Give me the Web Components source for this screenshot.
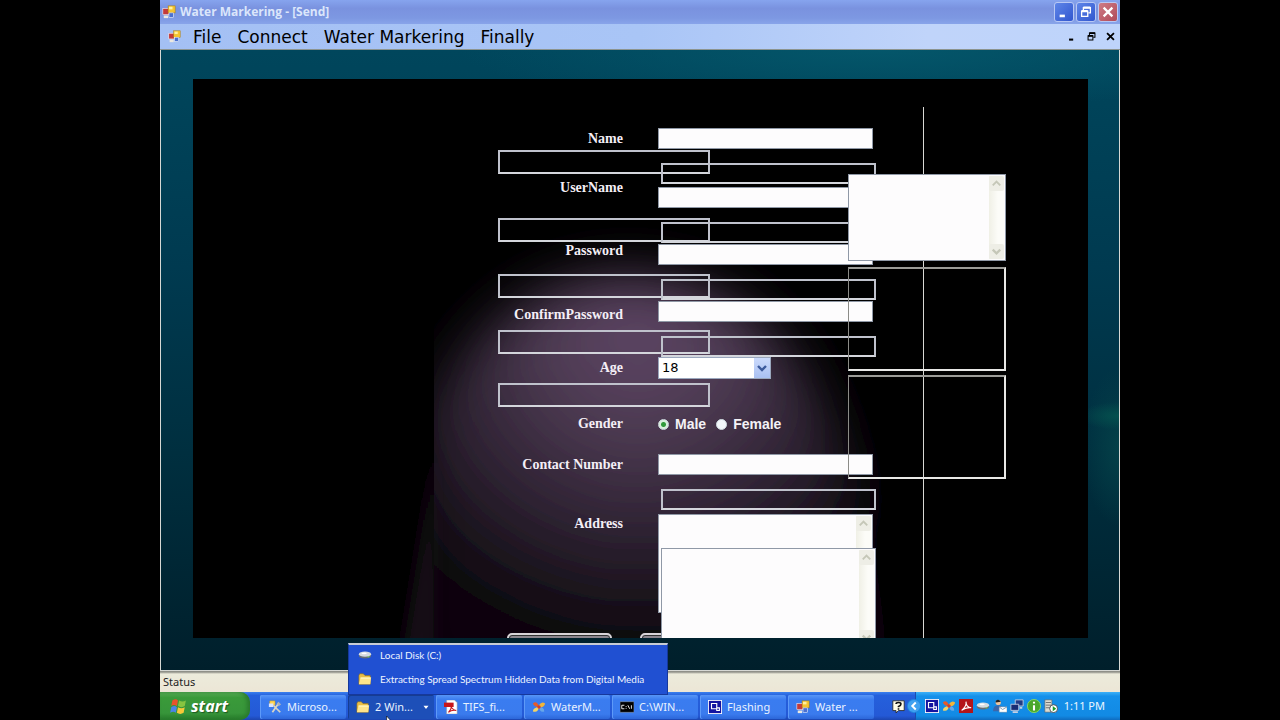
<!DOCTYPE html>
<html lang="en">
<head>
<meta charset="utf-8">
<title>Water Markering - [Send]</title>
<style>
html,body{margin:0;background:#000;overflow:hidden}
body{font-family:"Liberation Sans",sans-serif}
</style>
</head>
<body>
<xp-desktop></xp-desktop>
<script>
const ICONS = {
  form: '<rect x="1" y="4" width="7" height="7" fill="#c23a3a" stroke="#fff" stroke-width=".6"/><rect x="7" y="1" width="8" height="8" fill="#f4c430" stroke="#a87a10" stroke-width=".6"/><rect x="8" y="2" width="4" height="3" fill="#fff0a0"/><rect x="8" y="9" width="5" height="5" fill="#4a70d0" stroke="#fff" stroke-width=".6"/><path d="M2 12h5v3H2z" fill="#ece9e0"/>',
  flag: '<path d="M3 3q3-2 5 0L7 8Q4 6 2 8z" fill="#e8532a"/><path d="M9 3q3 2 6 0l-1 5q-3 2-6 0z" fill="#86c440"/><path d="M2 9q3-2 5 0l-1 5q-2-2-5 0z" fill="#4a84e8"/><path d="M8 9q3 2 6 0l-1 5q-3 2-6 0z" fill="#f8c838"/>',
  tools: '<path d="M2 1h6v5H2z" fill="#ffd858" stroke="#c29320" stroke-width=".6"/><path d="M1 4h5v4H1z" fill="#d8e4ff"/><path d="M6 6l8 8M12 4l-7 10" stroke="#d8d4c4" stroke-width="2"/><path d="M12 2l3 3-3 2-2-3z" fill="#aab0bc"/>',
  folder: '<path d="M1 4l1-2h4l2 2h6v10H1z" fill="#e9bd45" stroke="#8c6a14" stroke-width=".6"/><path d="M1 14L3 6h12l-1 8z" fill="#ffe48a"/><path d="M3 7h11" stroke="#fffbd0"/>',
  pdf: '<path d="M3 0h9l3 3v13H3z" fill="#fff" stroke="#999" stroke-width=".6"/><rect x="0" y="3" width="11" height="5" fill="#c8161a"/><path d="M5 14q4-4 3-7 1 4 6 5-5-1-9 2z" fill="none" stroke="#c8161a" stroke-width="1.2"/>',
  acro: '<rect x="0" y="0" width="16" height="16" fill="#b3151a"/><path d="M3 13q6-5 5-10 0 6 6 7-6-1-11 3z" fill="none" stroke="#fff" stroke-width="1.3"/>',
  fan: '<path d="M1 4q4-4 7 3Q3 9 1 4z" fill="#e65a28"/><path d="M8 6q3-5 7-2-1 5-7 4z" fill="#f1b63b"/><path d="M8 8q6 0 6 5-5 2-6-5z" fill="#68a7e8"/><path d="M8 8q-1 7-7 5 0-4 7-5z" fill="#f4d465"/><circle cx="8" cy="8" r="2" fill="#d73b24"/>',
  cmd: '<rect x="0" y="2" width="16" height="12" fill="#000" stroke="#788ba8" stroke-width=".8"/><path d="M5 6H2v4h3M7 7v1m0 1v1M9 6l2 4M13 6v4" stroke="#fff" fill="none"/>',
  flash: '<rect width="16" height="16" fill="#fff"/><rect x="1" y="1" width="14" height="14" fill="#1414a0"/><path d="M4 4h6v6H4zM10 9h3v3h-3z" fill="none" stroke="#fff" stroke-width="1.3"/>',
  disk: '<ellipse cx="8" cy="9" rx="7" ry="3" fill="#666d75"/><ellipse cx="8" cy="7" rx="7" ry="3" fill="#d6dce0"/><ellipse cx="7" cy="6" rx="3" ry="1" fill="#fff"/><path d="M11 10h2" stroke="#7df06b"/>',
  help: '<path d="M1 1h14v12H8l-3 3v-3H1z" fill="#fffde8" stroke="#222"/><path d="M5 5q0-2 3-2t3 2q0 2-3 3v1M8 10v2" fill="none" stroke="#111" stroke-width="2"/>',
  user: '<circle cx="6" cy="4" r="3" fill="#efc49c"/><path d="M3 4q0-4 4-3l2 2z" fill="#222"/><path d="M0 14q0-7 6-7t6 7z" fill="#3a66aa"/><rect x="7" y="9" width="9" height="6" fill="#fff" stroke="#7890a8" stroke-width=".6"/><path d="M7 9l4 3 5-3" stroke="#7890a8" fill="none"/>',
  net: '<path d="M6 1h9v7H6z" fill="#213b86" stroke="#c5d0e4"/><path d="M1 6h9v7H1z" fill="#182d74" stroke="#c5d0e4"/><path d="M3 15h6M11 10h3" stroke="#c5d0e4" stroke-width="2"/>',
  info: '<circle cx="8" cy="8" r="7.5" fill="#49a72c" stroke="#8bdb63"/><path d="M8 3v2M8 7v6" stroke="#fff" stroke-width="2.4"/>',
  server: '<path d="M1 1h8v14H1z" fill="#dcdcd2" stroke="#666" stroke-width=".7"/><path d="M2 4h6M2 7h6M2 10h6" stroke="#666"/><circle cx="11" cy="11" r="4.5" fill="#fff" stroke="#444"/><path d="M10 8l4 3-4 3z" fill="#199b25"/>',
  chev: '<circle cx="8" cy="8" r="8" fill="#2287e0"/><circle cx="8" cy="8" r="7" fill="#3fa1f0"/><path d="M10 4L6 8l4 4" fill="none" stroke="#fff" stroke-width="2.2"/>',
  min: '<path d="M3 11h6v3H3z" fill="currentColor"/>',
  restore: '<path d="M5 6V3h8v6h-2M3 7h7v6H3z" fill="none" stroke="currentColor" stroke-width="1.5"/><path d="M5 3h8M3 7h7" stroke="currentColor" stroke-width="2.4"/>',
  close: '<path d="M3 3l10 10M13 3L3 13" stroke="currentColor" stroke-width="2.6"/>',
  up: '<path d="M4 10l4-4 4 4" fill="none" stroke="currentColor" stroke-width="2"/>',
  down: '<path d="M4 6l4 4 4-4" fill="none" stroke="currentColor" stroke-width="2.4"/>',
  caret: '<path d="M4 6h8l-4 5z" fill="#fff"/>',
  cursor: '<path d="M1 0v15l4-4h6z" fill="#fff" stroke="#000"/>'
};
const define = (name, html) => {
  const t = document.createElement('template');
  customElements.define(name, class extends HTMLElement {
    constructor(){ super(); this.attachShadow({mode:'open'}); }
    connectedCallback(){
      if (this.shadowRoot.childNodes.length) return;
      t.innerHTML = typeof html === 'function' ? html(this) : html;
      this.shadowRoot.append(t.content.cloneNode(true));
    }
  });
};
const at = (el, n, d='') => el.getAttribute(n) ?? d;

define('xp-icon', el => `<style>:host{display:block;flex:none;width:var(--icon,14px);height:var(--icon,14px)}svg{display:block;width:100%;height:100%}</style>
<svg viewBox="0 0 16 16" aria-hidden="true">${ICONS[at(el,'name')]}</svg>`);

define('title-bar', `<style>
:host{display:flex;align-items:center;height:24px;padding:0 2px;gap:4px;background:linear-gradient(#86a4ee,#7a92df 35%,#7d98e2 75%,#88a4ea)}
h1{margin:0;flex:1;font:bold 12px/24px "Open Sans",sans-serif;color:#dbe6fb}
nav{display:flex;gap:2px}
button{width:20px;height:20px;padding:2px;border:1px solid #b8c8f4;border-radius:3px;background:linear-gradient(135deg,#5f86e8,#3156cf);color:#fff}
button.x{background:linear-gradient(135deg,#cf7c86,#b04a58)}
</style>
<xp-icon name="form"></xp-icon><h1>Water Markering - [Send]</h1>
<nav><button aria-label="Minimize"><xp-icon name="min"></xp-icon></button><button aria-label="Restore"><xp-icon name="restore"></xp-icon></button><button class="x" aria-label="Close"><xp-icon name="close"></xp-icon></button></nav>`);

define('menu-bar', `<style>
:host{display:flex;align-items:center;height:26px;padding:0 4px 0 8px;background:linear-gradient(90deg,#a4c0f4,#a9c5f6 50%,#c0d4fa 80%,#bed4fb);border-bottom:1px solid #8c948f;box-sizing:border-box;--icon:13px}
nav{display:flex;gap:16px;flex:1;margin-left:12px}
button{border:0;padding:0;background:none;color:#000;font:17px/22px "DejaVu Sans",sans-serif}
.mdi{display:flex;gap:8px;--icon:11px}
</style>
<xp-icon name="form"></xp-icon>
<nav><button>File</button><button>Connect</button><button>Water Markering</button><button>Finally</button></nav>
<div class="mdi"><button aria-label="Minimize form"><xp-icon name="min"></xp-icon></button><button aria-label="Restore form"><xp-icon name="restore"></xp-icon></button><button aria-label="Close form"><xp-icon name="close"></xp-icon></button></div>`);

define('text-area', el => `<style>
:host{display:flex;box-sizing:border-box;background:#fdfcfd;border:1px solid #8f98a6}
textarea{flex:1;min-width:0;border:0;padding:2px;margin:0;resize:none;background:none;outline:0;overflow:hidden}
.bar{width:15px;margin:1px;display:flex;flex-direction:column;justify-content:space-between;background:linear-gradient(90deg,#f0f0e6,#fcfcf8 60%);color:#c5c7b8;--icon:15px}
xp-icon{background:#eeeee6;border-radius:2px}
</style><textarea id="t" aria-label="${at(el,'label')}"></textarea><div class="bar"><xp-icon name="up"></xp-icon><xp-icon name="down"></xp-icon></div>`);

const FIELDS = {
  text: '<input id="f" type="text">',
  password: '<input id="f" type="password">',
  age: '<div class="pick"><select id="f"><option>18</option><option>19</option><option>20</option></select><xp-icon name="down"></xp-icon></div>',
  gender: '<div class="radios" role="radiogroup" aria-labelledby="l"><label><input type="radio" name="g" checked>Male</label><label><input type="radio" name="g">Female</label></div>',
  area: '<text-area label="Address"></text-area>'
};
define('form-row', el => `<style>
:host{display:grid;grid-template-columns:125px 215px;column-gap:35px;align-items:center}
.l{display:block;font:bold 14px/20px "Liberation Serif",serif;color:#f4eef6;text-align:right;white-space:nowrap;align-self:var(--label-align,center)}
.f{align-self:var(--field-align,center)}
input:not([type=radio]){display:block;box-sizing:border-box;width:100%;height:21px;border:1px solid #8f98a6;background:#fdfcfd;padding:1px 3px;outline:0}
.pick{position:relative;width:113px;--icon:16px;color:#3c5a9c}
select{display:block;appearance:none;box-sizing:border-box;width:100%;height:22px;border:1px solid #9aa7bd;background:#fff;padding:0 3px;font:13px/20px "DejaVu Sans",sans-serif;color:#000;border-radius:0}
.pick xp-icon{position:absolute;right:1px;top:1px;height:20px;background:linear-gradient(#cbdafc,#a9c0f2);pointer-events:none}
.radios{display:flex;gap:10px}
.radios label{display:flex;align-items:center;gap:6px;font:bold 14px/22px "Liberation Sans",sans-serif;color:#f4f2f6}
input[type=radio]{appearance:none;margin:0;width:11px;height:11px;border-radius:50%;background:#f2f7fa;border:1px solid #cfdbe0}
input[type=radio]:checked{background:radial-gradient(circle,#2f9a3a 2px,#d9efdc 3px)}
text-area{height:99px}
</style>
${/gender|area/.test(at(el,'kind')) ? `<div class="l" id="l">${at(el,'label')}</div>` : `<label class="l" for="f">${at(el,'label')}</label>`}
<div class="f">${FIELDS[at(el,'kind')]}</div>`);

define('spot-light', `<style>:host{display:block;position:absolute;inset:0;overflow:hidden}svg{display:block}</style>
<svg width="895" height="560" viewBox="0 0 895 560" aria-hidden="true">
<defs><radialGradient id="g" gradientUnits="userSpaceOnUse" cx="445" cy="255" r="310">
<stop offset="0" stop-color="#5e4665"/><stop offset=".3" stop-color="#4e3b53"/><stop offset=".55" stop-color="#35283a"/><stop offset=".78" stop-color="#211824"/><stop offset="1" stop-color="#080609"/></radialGradient>
<filter id="b" x="-20%" y="-20%" width="140%" height="140%"><feGaussianBlur stdDeviation="26"/></filter>
<filter id="s" x="-60%" y="-20%" width="220%" height="140%"><feGaussianBlur stdDeviation="8"/></filter>
<clipPath id="c"><path d="M241 0h654v560H241z"/></clipPath></defs>
<path d="M245 350L205 600h40z" fill="#120b12" filter="url(#s)"/>
<g clip-path="url(#c)"><path d="M225 600V345C270 250 345 198 430 196C530 196 605 250 645 360C675 430 690 500 695 600z" fill="url(#g)" filter="url(#b)"/></g>
</svg>`);

define('send-form', `<style>
:host{display:grid;grid-template-columns:1fr 508px 82px;position:relative;min-height:0;overflow:hidden;background:#000}
form{grid-column:2;position:relative;padding-top:49px;min-height:0}
form-row{margin-bottom:var(--after)}
.split{--label-align:start;--field-align:end}
.flip{--label-align:end;--field-align:start}
.top{--label-align:start}
.frames{position:absolute;inset:0;pointer-events:none}
.frames i,.over i,.over text-area{position:absolute;box-sizing:border-box}
.frames i{border:2px solid #bfc2cc;border-bottom-color:#d4d6dc}
.a{left:0;width:212px;height:24px}
.b{left:163px;width:215px;height:21px}
.rows{position:relative}
.over i{left:350px;width:158px;height:104px;border:2px solid #e8e8e6;border-top-color:#9c9c98;border-left:1px solid #8c8c88}
.over .rule{left:425px;top:28px;width:1px;height:auto;bottom:0;border:0;background:#d8d8d4}
.over{position:absolute;inset:0;pointer-events:none}
.buttons{display:flex;gap:28px;margin:20px 0 0 9px}
.buttons button{width:105px;height:26px;border:2px solid #d8d4d8;border-radius:5px;background:#8c868e;box-shadow:inset 0 0 0 1px #333}
</style>
<spot-light></spot-light>
<form>
<div class="frames"><i class="a" style="top:71px"></i><i class="a" style="top:139px"></i><i class="a" style="top:195px"></i><i class="a" style="top:251px"></i><i class="a" style="top:304px"></i>
<i class="b" style="top:84px"></i><i class="b" style="top:143px"></i><i class="b" style="top:200px"></i><i class="b" style="top:257px"></i><i class="b" style="top:410px"></i></div>
<div class="rows">
<form-row label="Name" kind="text" style="--after:29px"></form-row>
<form-row class="split" label="UserName" kind="text" style="height:30px;--after:33px"></form-row>
<form-row class="split" label="Password" kind="password" style="height:24px;--after:36px"></form-row>
<form-row class="flip" label="ConfirmPassword" kind="password" style="height:24px;--after:32px"></form-row>
<form-row label="Age" kind="age" style="--after:34px"></form-row>
<form-row label="Gender" kind="gender" style="--after:19px"></form-row>
<form-row label="Contact Number" kind="text" style="--after:39px"></form-row>
<form-row class="top" label="Address" kind="area" style="--after:0px"></form-row>
<div class="buttons"><button type="button" aria-label="Submit"></button><button type="button" aria-label="Reset"></button></div>
</div>
<div class="over"><i class="rule"></i><i style="top:188px"></i><i style="top:296px"></i>
<text-area label="Address details" style="left:163px;top:469px;width:215px;height:99px"></text-area>
<text-area label="Messages" style="left:350px;top:95px;width:158px;height:87px"></text-area></div>
</form>`);

define('task-button', el => `<style>
:host{display:block;position:relative;flex:0 1 86px;min-width:0}
button{display:flex;align-items:center;gap:5px;width:100%;height:24px;padding:0 3px 0 8px;border:0;border-radius:2px;background:linear-gradient(#5795f6,#3a7cf0 20%,#3a7bee 80%,#2c66d8);color:#e8f2ff;font:11px/20px "Noto Sans",sans-serif;white-space:nowrap;text-align:left;box-shadow:inset 1px 0 #5e9af8}
:host([active]) button{background:#1d4fb8;box-shadow:inset 1px 1px #163d92}
span{flex:1}
:host([active]) xp-icon:last-of-type{--icon:10px}
</style><button><xp-icon name="${at(el,'icon')}"></xp-icon><span>${at(el,'label')}</span>${el.hasAttribute('active')?'<xp-icon name="caret"></xp-icon>':''}</button><slot></slot>`);

define('task-menu', `<style>
:host{position:absolute;left:0;bottom:25px;width:320px;box-sizing:border-box;background:#2050d2;border:1px solid #16389c;border-top:2px solid #c8ccd4;z-index:5;font:10px/22px Lato,sans-serif}
a{display:flex;align-items:center;gap:8px;height:20px;padding:0 0 4px 9px;color:#eef4ff;text-decoration:none;white-space:nowrap}
a:last-child{padding-bottom:5px}
</style><a href="#disk"><xp-icon name="disk"></xp-icon>Local Disk (C:)</a><a href="#data"><xp-icon name="folder"></xp-icon>Extracting Spread Spectrum Hidden Data from Digital Media</a>`);

define('task-bar', `<style>
:host{display:flex;height:28px;position:relative;background:linear-gradient(#3a80ee,#2560dc 12%,#2459d6 85%,#1c46b0)}
.start{display:flex;align-items:center;gap:4px;width:90px;flex:none;border:0;border-radius:0 10px 10px 0;padding:0 0 0 9px;background:linear-gradient(#5cb05a,#3a9a3a 20%,#37953a 75%,#267a2a);color:#fff;font:italic bold 16px/26px "Open Sans",sans-serif;--icon:18px;text-shadow:1px 1px 1px #1c5a20;box-shadow:inset -3px 0 4px #2a7a2e}
.tasks{display:flex;flex:1;gap:2px;padding:3px 0 0 10px;min-width:0}
.help{align-self:center;margin-right:10px;--icon:13px}
.tray{display:flex;align-items:center;gap:3px;width:205px;box-sizing:border-box;padding-right:15px;background:linear-gradient(#3cb0f8,#1590ea 15%,#128ae4 85%,#0f6cc0);border-left:1px solid #1c4cae;color:#eaf6ff;font:11px/20px "Noto Sans",sans-serif}
.tray xp-icon:first-child{margin-left:-9px}
.tray xp-icon:nth-child(2){margin-left:1px}
time{margin-left:auto;white-space:nowrap}
.cursor{position:absolute;left:226px;top:24px;--icon:10px;width:10px;height:4px;overflow:hidden}
</style>
<button class="start"><xp-icon name="flag"></xp-icon>start</button>
<div class="tasks">
<task-button icon="tools" label="Microso..."></task-button>
<task-button icon="folder" label="2 Win..." active><task-menu></task-menu></task-button>
<task-button icon="pdf" label="TIFS_fi..."></task-button>
<task-button icon="fan" label="WaterM..."></task-button>
<task-button icon="cmd" label="C:\\WIN..."></task-button>
<task-button icon="flash" label="Flashing"></task-button>
<task-button icon="form" label="Water ..."></task-button></div>
<xp-icon class="help" name="help"></xp-icon>
<div class="tray"><xp-icon name="chev"></xp-icon><xp-icon name="flash"></xp-icon><xp-icon name="fan"></xp-icon><xp-icon name="acro"></xp-icon><xp-icon name="disk"></xp-icon><xp-icon name="user"></xp-icon><xp-icon name="net"></xp-icon><xp-icon name="info"></xp-icon><xp-icon name="server"></xp-icon><time>1:11 PM</time></div>
<div class="cursor"><xp-icon name="cursor"></xp-icon></div>`);

define('xp-desktop', `<style>
:host{display:flex;flex-direction:column;height:100vh;margin:0 12.5%}
main{flex:1;min-height:0;display:grid;padding:29px 31px 32px 32px;border:solid #d6d8d4;border-width:0 1px 1px 1px;
background:radial-gradient(ellipse 40px 14px at 100% 59%,#04504e,transparent),radial-gradient(ellipse 36px 80px at 100% 64%,#044048,transparent),radial-gradient(ellipse 420px 60px at 75% 0,#04566a,transparent),linear-gradient(#00465c,#003a50 35%,#002f3f 65%,#001f2b)}
.status{height:21px;box-sizing:border-box;background:linear-gradient(#8f9088 0 1px,#ecebdb 3px,#ece6d6);padding-left:3px;font:11px/22px "Noto Sans",sans-serif;color:#222}
</style>
<title-bar></title-bar><menu-bar></menu-bar><main><send-form></send-form></main><div class="status">Status</div><task-bar></task-bar>`);
</script>
</body>
</html>
